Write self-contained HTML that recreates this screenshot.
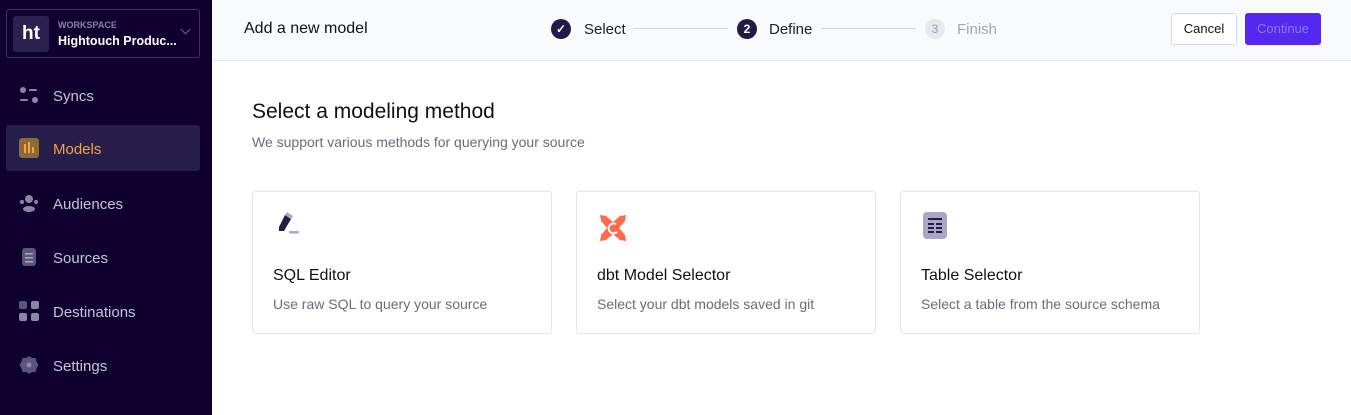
<!DOCTYPE html>
<html><head><style>
*{box-sizing:border-box;margin:0;padding:0}
body{width:1351px;height:415px;overflow:hidden;font-family:"Liberation Sans",sans-serif;background:#fff;position:relative}
.side{position:absolute;left:0;top:0;width:212px;height:415px;background:#10002f}
.ws{position:absolute;left:6px;top:9px;width:194px;height:49px;border:1px solid #3d3560;border-radius:3px}
.ws .logo{position:absolute;left:6px;top:6px;width:36px;height:36px;background:#2a2150;border-radius:3px;color:#fff;font-weight:bold;font-size:19px;text-align:center;line-height:35px}
.ws .l1{position:absolute;left:51px;top:10px;font-size:9px;color:#8880a8;font-weight:bold}
.ws .l2{position:absolute;left:51px;top:24px;font-size:12.5px;color:#fff;font-weight:bold}
.ws .ch{position:absolute;right:10px;top:16px;width:7px;height:7px;border-right:1.5px solid #6c6490;border-bottom:1.5px solid #6c6490;transform:rotate(45deg)}
.nav{position:absolute;left:6px;width:194px;height:46px;color:#c6c3dc;font-size:15px;line-height:50px;padding-left:47px}
.nav.act{background:#271d4a;border-radius:3px;color:#f3a73a}
.ic{position:absolute;left:13px;top:13px;width:20px;height:20px}
.top{position:absolute;left:212px;top:0;right:0;height:61px;background:#f9fafc;border-bottom:1px solid #e6e7ee}
.t{position:absolute;left:32px;top:20px;font-size:16px;color:#111}
.step{position:absolute;top:21px;font-size:15px;color:#222}
.circ{position:absolute;top:19px;width:20px;height:20px;border-radius:50%;background:#241a4a;color:#fff;font-size:12px;font-weight:bold;text-align:center;line-height:20px}
.line{position:absolute;top:28px;height:1px;background:#d6d7de}
.btn{position:absolute;top:13px;height:32px;border-radius:3px;font-size:13px;line-height:30px;text-align:center}
h1{position:absolute;left:252px;top:100px;font-size:21px;font-weight:normal;color:#111}
.sub{position:absolute;left:252px;top:134px;font-size:14px;color:#6b6b7b}
.card{position:absolute;top:191px;width:300px;height:143px;border:1px solid #e3e4ec;border-radius:3px}
.card .n{position:absolute;left:20px;top:75px;font-size:16px;color:#111}
.card .d{position:absolute;left:20px;top:104px;font-size:14px;color:#6b6b7b}
.card svg{position:absolute;left:22px;top:20px}
</style></head><body>
<div class="side">
 <div class="ws"><div class="logo">ht</div><div class="l1">WORKSPACE</div><div class="l2">Hightouch Produc...</div><div class="ch"></div></div>
 <div class="nav" style="top:72px"><svg class="ic" viewBox="0 0 20 20"><circle cx="4" cy="5" r="3" fill="#8b86a8"/><rect x="10" y="4" width="8" height="2" rx="1" fill="#8b86a8"/><rect x="1" y="14" width="8" height="2" rx="1" fill="#8b86a8"/><circle cx="16" cy="15" r="3" fill="#8b86a8"/></svg>Syncs</div>
 <div class="nav act" style="top:125px"><svg class="ic" viewBox="0 0 20 20"><rect width="20" height="20" rx="3" fill="#8b6a3a"/><rect x="5" y="6" width="2" height="9" fill="#f3a73a"/><rect x="9" y="4" width="2" height="11" fill="#f3a73a"/><rect x="13" y="9" width="2" height="6" fill="#f3a73a"/></svg>Models</div>
 <div class="nav" style="top:180px"><svg class="ic" viewBox="0 0 20 20"><circle cx="10" cy="6" r="4" fill="#8b86a8"/><circle cx="3" cy="9" r="2" fill="#8b86a8"/><circle cx="17" cy="9" r="2" fill="#8b86a8"/><ellipse cx="10" cy="16" rx="6" ry="3" fill="#8b86a8"/></svg>Audiences</div>
 <div class="nav" style="top:234px"><svg class="ic" viewBox="0 0 20 20"><rect x="3" y="1" width="14" height="18" rx="3" fill="#5a557a"/><rect x="6" y="6" width="8" height="1.5" fill="#aaa6c4"/><rect x="6" y="10" width="8" height="1.5" fill="#aaa6c4"/><rect x="6" y="14" width="8" height="1.5" fill="#aaa6c4"/></svg>Sources</div>
 <div class="nav" style="top:288px"><svg class="ic" viewBox="0 0 20 20"><rect x="0" y="0" width="8" height="8" rx="2" fill="#5a557a"/><rect x="12" y="0" width="8" height="8" rx="2" fill="#8b86a8"/><rect x="0" y="12" width="8" height="8" rx="2" fill="#8b86a8"/><rect x="12" y="12" width="8" height="8" rx="2" fill="#8b86a8"/></svg>Destinations</div>
 <div class="nav" style="top:342px"><svg class="ic" viewBox="0 0 20 20"><path d="M10 1l3 2 3.5 0 1 3.5 2 3.5-2 3.5-1 3.5-3.5 0-3 2-3-2-3.5 0-1-3.5-2-3.5 2-3.5 1-3.5 3.5 0z" fill="#5a557a"/><circle cx="10" cy="10" r="2.5" fill="#8b86a8"/></svg>Settings</div>
</div>
<div class="top">
 <div class="t">Add a new model</div>
 <div class="circ" style="left:339px;">✓</div><div class="step" style="left:372px">Select</div>
 <div class="line" style="left:421px;width:95px"></div>
 <div class="circ" style="left:525px">2</div><div class="step" style="left:557px">Define</div>
 <div class="line" style="left:609px;width:95px"></div>
 <div class="circ" style="left:713px;background:#e8e8f0;color:#9a9aaa;font-weight:normal">3</div><div class="step" style="left:745px;color:#a5a5b0">Finish</div>
 <div class="btn" style="left:959px;width:66px;border:1px solid #d6d7de;background:#fff;color:#111">Cancel</div>
 <div class="btn" style="left:1033px;width:76px;background:#5428f0;color:#8e78f7;border:1px solid #5428f0">Continue</div>
</div>
<h1>Select a modeling method</h1>
<div class="sub">We support various methods for querying your source</div>
<div class="card" style="left:252px"><svg width="28" height="30" viewBox="0 0 28 30" style="left:22px;top:18px"><path d="M10 5l6 4-7 12-5 0 0-4z" fill="#241a4a"/><path d="M10 5l2-3 6 4-2 3z" fill="#aaa6c4"/><rect x="14" y="21" width="10" height="2.5" rx="1" fill="#aaa6c4"/></svg><div class="n">SQL Editor</div><div class="d">Use raw SQL to query your source</div></div>
<div class="card" style="left:576px"><svg width="32" height="32" viewBox="0 0 32 32" style="left:20px;top:20px"><path d="M3 3l6 1 7 6 7-6 6-1-1 6-6 7 6 7 1 6-6-1-7-6-7 6-6 1 1-6 6-7-6-7z" fill="#fe6a4b"/><path d="M19 12a5 5 0 1 0 1 8" stroke="#fff" stroke-width="2" fill="none"/></svg><div class="n">dbt Model Selector</div><div class="d">Select your dbt models saved in git</div></div>
<div class="card" style="left:900px"><svg width="26" height="28" viewBox="0 0 26 28"><rect x="0" y="0" width="24" height="27" rx="4" fill="#aaa6c4"/><rect x="5" y="6" width="14" height="2" fill="#241a4a"/><rect x="5" y="11" width="6" height="2" fill="#241a4a"/><rect x="13" y="11" width="6" height="2" fill="#241a4a"/><rect x="5" y="15" width="6" height="2" fill="#241a4a"/><rect x="13" y="15" width="6" height="2" fill="#241a4a"/><rect x="5" y="19" width="6" height="2" fill="#241a4a"/><rect x="13" y="19" width="6" height="2" fill="#241a4a"/></svg><div class="n">Table Selector</div><div class="d">Select a table from the source schema</div></div>
</body></html>
